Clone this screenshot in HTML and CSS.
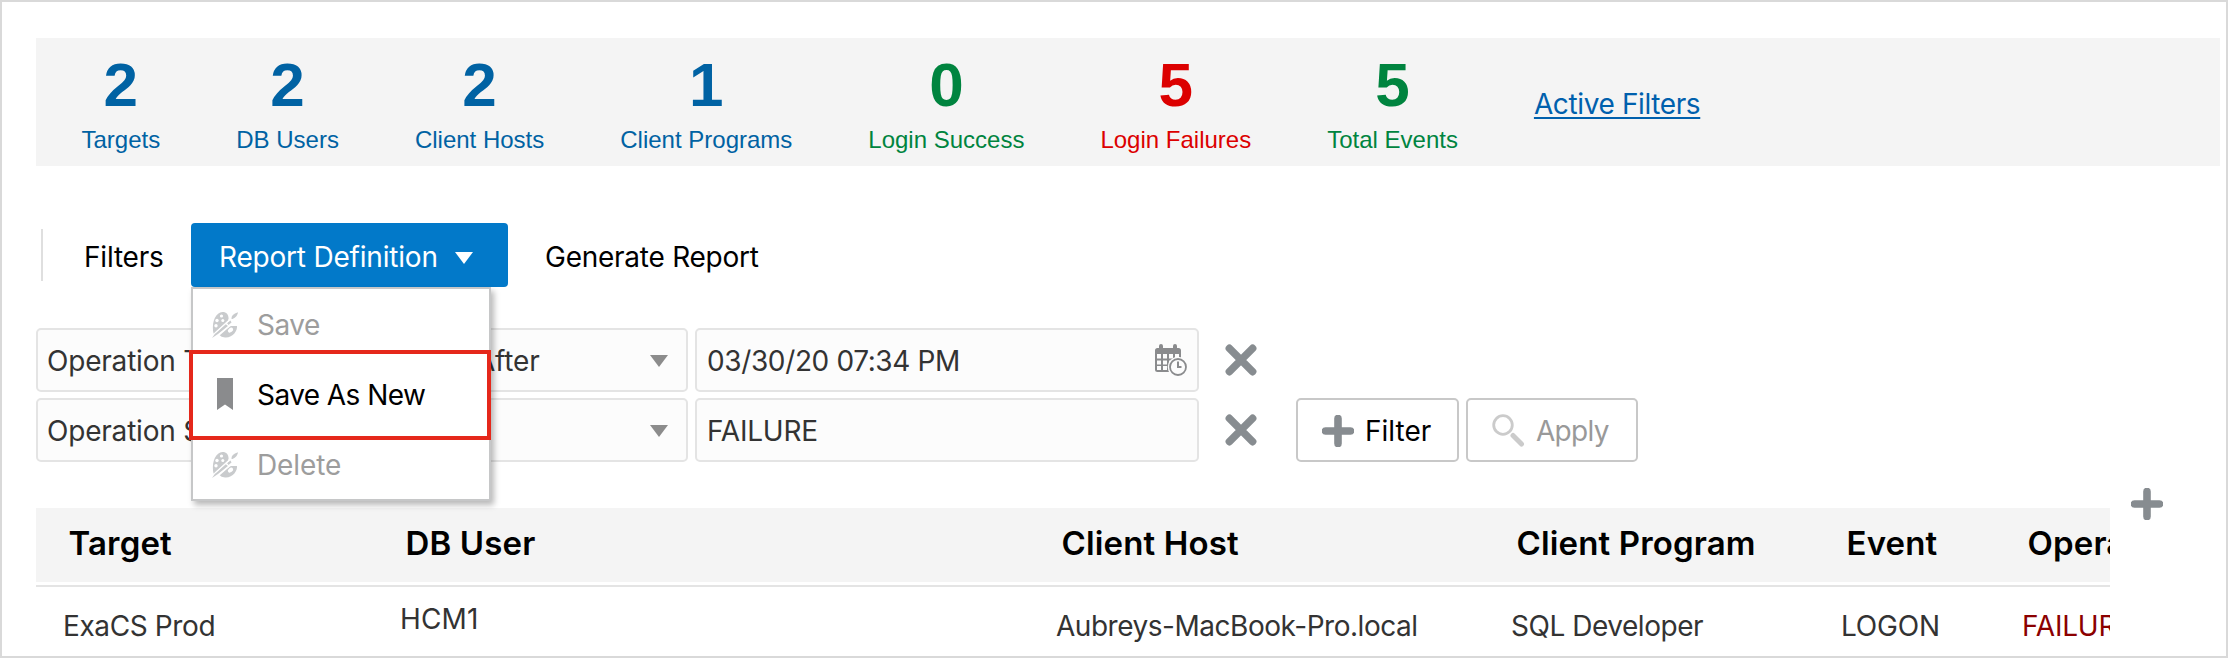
FILE: index.html
```
<!DOCTYPE html>
<html lang="en">
<head>
<meta charset="utf-8">
<title>All Activity Report</title>
<link rel="stylesheet" href="styles.css">
</head>
<body>
<svg class="defs" aria-hidden="true">
  <symbol id="palette" viewBox="0 0 26 26">
    <path fill="#c9cbcd" d="M1 19C0 9 4 1 10.500 .5C14.500 .5 16.500 3 16.500 7L16 9L4 20.500L1.500 22Z"/>
    <path fill="#c9cbcd" d="M9 22L15 16.500L19 14.500L25 14.500C25.500 19 21 26.500 13 26Q9 25.500 7.500 23.500Z"/>
    <path fill="#c9cbcd" d="M0 26.500L3.500 21.500L13.500 12.500L16 14.500L6 22.500ZM15 11.500L18.500 9L19.500 11L16.500 13.500ZM19.500 7.500Q19 3 26 .8Q25.500 5.500 20.500 7.500Z"/>
    <path fill="none" stroke="#fff" stroke-width="1.300" d="M3 21.500L17 9M7 23.500L17.500 14.500"/>
    <g fill="#fff"><circle cx="9.500" cy="4.500" r="1.600"/><circle cx="5" cy="9" r="1.700"/><circle cx="4" cy="14.300" r="1.700"/><circle cx="10.800" cy="9" r="1.500"/><ellipse cx="18.500" cy="18.600" rx="2.900" ry="2.100" transform="rotate(-35 18.500 18.600)"/></g>
  </symbol>
  <symbol id="plus" viewBox="0 0 32 32"><path fill="none" stroke="#878c90" stroke-width="7.600" stroke-linecap="round" d="M16 3.500V28.500M3.500 16H28.500"/></symbol>
  <symbol id="cross" viewBox="0 0 32 32"><path fill="none" stroke="#878c90" stroke-width="7.600" stroke-linecap="round" d="M4.400 4.400L27.600 27.600M27.600 4.400L4.400 27.600"/></symbol>
</svg>
<main class="page">
  <section class="stats">
    <div class="stat"><b>2</b><span>Targets</span></div>
    <div class="stat"><b>2</b><span>DB Users</span></div>
    <div class="stat"><b>2</b><span>Client Hosts</span></div>
    <div class="stat"><b>1</b><span>Client Programs</span></div>
    <div class="stat good"><b>0</b><span>Login Success</span></div>
    <div class="stat bad"><b>5</b><span>Login Failures</span></div>
    <div class="stat good"><b>5</b><span>Total Events</span></div>
    <a class="active-filters">Active Filters</a>
  </section>

  <nav class="toolbar">
    <span class="divider"></span>
    <span class="tool filters">Filters</span>
    <div class="dropdown">
      <div class="dropdown-button">Report Definition<svg width="18" height="12" viewBox="0 0 18 12"><path fill="#fff" d="M0 0H18L9 12Z"/></svg></div>
      <div class="menu">
        <div class="menu-item disabled"><svg width="26" height="27"><use href="#palette"/></svg>Save</div>
        <div class="menu-item current"><svg width="26" height="33" viewBox="0 0 26 33"><path fill="#8a8b8d" d="M5 1H21V33L13 27.500L5 33Z"/></svg><span>Save As New</span></div>
        <div class="menu-item disabled"><svg width="26" height="27"><use href="#palette"/></svg>Delete</div>
      </div>
    </div>
    <span class="tool generate">Generate Report</span>
  </nav>

  <section class="filter-rows">
    <div class="filter-row">
      <div class="field name">Operation Time</div>
      <div class="field operator"><span>After</span><svg width="18" height="12" viewBox="0 0 18 12"><path fill="#8c8c8c" d="M0 0H18L9 12Z"/></svg></div>
      <div class="field value"><span class="date">03/30/20 07:34 PM</span>
        <svg width="32" height="32" viewBox="0 0 32 32">
          <path fill="#8a8b8d" d="M2.500 4H4V2Q4 0 6 0Q8 0 8 2V4H18V2Q18 0 20 0Q22 0 22 2V4H23.500Q26 4 26 6.500V28H2.500Q0 28 0 25.500V6.500Q0 4 2.500 4Z"/>
          <path fill="#fcfcfc" d="M2 10H6V14.500H2ZM8 10H12V14.500H8ZM14 10H18V14.500H14ZM20 10H24V14.500H20ZM2 16.500H6V20.500H2ZM8 16.500H12V20.500H8ZM14 16.500H18V20.500H14ZM2 22H6V26H2ZM8 22H12V26H8Z"/>
          <circle cx="23" cy="23" r="10.300" fill="#fcfcfc"/><circle cx="23" cy="23" r="8" fill="#fcfcfc" stroke="#8a8b8d" stroke-width="1.800"/><path fill="none" stroke="#8a8b8d" stroke-width="2" d="M23 17.500V23H26.500"/>
        </svg></div>
      <svg class="remove" width="32" height="32"><use href="#cross"/></svg>
    </div>
    <div class="filter-row">
      <div class="field name">Operation Status</div>
      <div class="field operator blank"><svg width="18" height="12" viewBox="0 0 18 12"><path fill="#8c8c8c" d="M0 0H18L9 12Z"/></svg></div>
      <div class="field value">FAILURE</div>
      <svg class="remove" width="32" height="32"><use href="#cross"/></svg>
      <div class="button add"><svg width="32" height="32"><use href="#plus"/></svg>Filter</div>
      <div class="button apply"><svg width="33" height="33" viewBox="0 0 33 33"><circle cx="11" cy="11" r="9.300" fill="none" stroke="#cbcbcb" stroke-width="2.800"/><path stroke="#cbcbcb" stroke-width="5" stroke-linecap="round" d="M21 21.500L29.500 30"/></svg>Apply</div>
    </div>
  </section>

  <section class="results">
    <div class="table">
      <div class="row head"><span>Target</span><span>DB User</span><span>Client Host</span><span>Client Program</span><span>Event</span><span>Operation Status</span></div>
      <div class="row body"><span class="target">ExaCS Prod</span><span class="user">HCM1</span><span class="host">Aubreys-MacBook-Pro.local</span><span class="program">SQL Developer</span><span>LOGON</span><span class="failure">FAILURE</span></div>
    </div>
    <svg width="32" height="32"><use href="#plus"/></svg>
  </section>
</main>
</body>
</html>
```
FILE: styles.css
```
* { box-sizing: border-box; }
body { margin: 0; background: #fff; color: #333; font: 28px/34px Inter, "Liberation Sans", sans-serif; letter-spacing: -0.2px; white-space: nowrap; }
svg { display: block; flex: none; }
.defs { display: none; }
.page { width: 2228px; height: 658px; border: 2px solid #d9d9d9; padding: 36px 0 0 34px; overflow: hidden; }

.stats { display: flex; width: 2184px; height: 128px; padding-left: 45.5px; background: #f4f4f4; color: #0062a3; gap: 76px; }
.stat { display: flex; flex-direction: column; align-items: center; padding-top: 17px; font-family: "Liberation Sans", Arial, sans-serif; letter-spacing: 0; }
.stat b { font-size: 62px; line-height: 60px; }
.stat span { margin-top: 11px; font-size: 24px; line-height: 28px; }
.good { color: #00843f; }
.bad { color: #dc0000; }
.active-filters { align-self: center; color: #0060ad; text-decoration: underline; text-decoration-thickness: 2px; text-underline-offset: 3px; letter-spacing: -0.38px; margin-top: 4px; }

.toolbar { display: flex; align-items: center; height: 64px; margin-top: 57px; color: #000; }
.divider { width: 2px; height: 52px; margin-left: 5px; background: #dfdfdf; }
.tool { padding-top: 4px; }
.filters { width: 107px; margin-left: 41px; }
.generate { margin-left: 37px; letter-spacing: -0.25px; }
.dropdown { position: relative; }
.dropdown-button { display: flex; align-items: center; justify-content: space-between; width: 317px; height: 64px; padding: 4px 35px 0 28px; border-radius: 4px; background: #0279c9; color: #fff; letter-spacing: -0.2px; }
.dropdown-button svg { margin-top: 1px; }
.menu { position: absolute; z-index: 2; top: 64px; left: 0; width: 300px; height: 214px; border: 2px solid #c6c7c8; background: #fff; box-shadow: 3px 4px 6px rgba(0, 0, 0, .28); }
.menu-item { display: flex; align-items: center; gap: 19px; height: 70px; padding: 0 0 0 19px; color: #000; }
.menu-item.disabled { color: #9d9d9d; letter-spacing: -0.5px; }
.menu-item.disabled:first-child { height: 61px; padding-top: 10px; }
.menu-item.disabled:last-child { height: 52px; padding-bottom: 3px; letter-spacing: -0.1px; }
.menu-item.current { height: 90px; width: 302px; margin-left: -4px; padding: 0 0 0 19px; border: 4px solid #e5281b; letter-spacing: -0.56px; gap: 19px; }
.menu-item.current svg { margin-top: -4px; }

.filter-rows { display: grid; gap: 6px; margin-top: 41px; }
.filter-row { display: flex; align-items: center; height: 64px; }
.field { display: flex; align-items: center; justify-content: space-between; height: 64px; padding: 2px 10px 0; border: 2px solid #e4e4e4; border-radius: 5px; background: #fcfcfc; }
.name { width: 420px; margin-right: 8px; padding-left: 9px; }
.operator { width: 224px; margin-right: 7px; padding-right: 18px; }
.blank { justify-content: flex-end; }
.value { width: 504px; }
.date { letter-spacing: -0.37px; }
.value svg { margin-top: -2px; }
.remove { margin-left: 26px; }
.button { display: flex; align-items: center; height: 64px; padding: 1px 0 0 24px; gap: 11px; border: 2px solid #c8c8c8; border-radius: 5px; color: #000; }
.add { width: 163px; margin-left: 39px; letter-spacing: 0; }
.apply { width: 172px; margin-left: 7px; color: #999; letter-spacing: -0.7px; }

.results { display: flex; gap: 21px; margin-top: 26px; }
.table { width: 2074px; margin-top: 20px; overflow: hidden; }
.row { display: grid; grid-template-columns: 337px 656px 455px 330px 181px 300px; width: 2300px; }
.head { height: 74px; padding: 18px 0 0 32.5px; background: #f4f4f4; color: #000; font-size: 33px; font-weight: 600; letter-spacing: .15px; }
.body { margin-top: 3px; height: 69px; padding: 22px 0 0 27px; border-top: 2px solid #e4e4e4; }
.target { letter-spacing: -0.38px; }
.user { margin-top: -7px; letter-spacing: .15px; }
.host, .program { letter-spacing: -0.47px; }
.failure { color: #8b0000; }
```
